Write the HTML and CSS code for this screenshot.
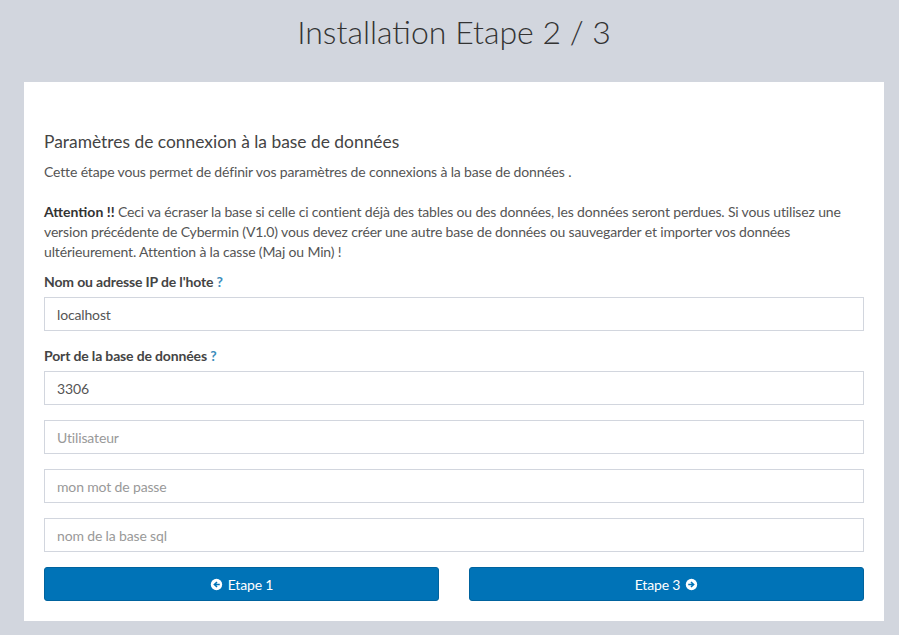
FILE: index.html
```html
<!DOCTYPE html>
<html lang="fr">
<head>
<meta charset="utf-8">
<title>Installation Etape 2 / 3</title>
<link rel="stylesheet" href="styles.css">
</head>
<body>
<div class="wrap">
  <h1 class="title">Installation Etape 2 / 3</h1>
  <div class="box">
    <h3 class="box-title">Paramètres de connexion à la base de données</h3>
    <p class="intro">Cette étape vous permet de définir vos paramètres de connexions à la base de données .</p>
    <p class="warn"><b>Attention !!</b> Ceci va écraser la base si celle ci contient déjà des tables ou des données, les données seront perdues. Si vous utilisez une version précédente de Cybermin (V1.0) vous devez créer une autre base de données ou sauvegarder et importer vos données ultérieurement. Attention à la casse (Maj ou Min) !</p>
    <div class="group">
      <label class="label">Nom ou adresse IP de l'hote <span class="q">?</span></label>
      <input class="field" type="text" value="localhost">
    </div>
    <div class="group">
      <label class="label">Port de la base de données <span class="q">?</span></label>
      <input class="field" type="text" value="3306">
    </div>
    <div class="group">
      <input class="field" type="text" placeholder="Utilisateur">
    </div>
    <div class="group">
      <input class="field" type="password" placeholder="mon mot de passe">
    </div>
    <div class="group">
      <input class="field" type="text" placeholder="nom de la base sql">
    </div>
    <div class="actions">
      <button class="btn"><svg class="ico" viewBox="0 0 16 16"><circle cx="8" cy="8" r="7" fill="#fff"/><path d="M4 8 L8 4.2 L9.3 5.5 L7.6 7.1 H12 V8.9 H7.6 L9.3 10.5 L8 11.8 Z" fill="#0073b7"/></svg>Etape 1</button>
      <button class="btn">Etape 3<svg class="ico ico-r" viewBox="0 0 16 16"><circle cx="8" cy="8" r="7" fill="#fff"/><path d="M12 8 L8 4.2 L6.7 5.5 L8.4 7.1 H4 V8.9 H8.4 L6.7 10.5 L8 11.8 Z" fill="#0073b7"/></svg></button>
    </div>
  </div>
</div>
</body>
</html>
```
FILE: styles.css
```css
html, body {
  margin: 0;
  padding: 0;
  background: #d2d6de;
}
body {
  font-family: Lato, "Open Sans", sans-serif;
  font-size: 14px;
  letter-spacing: -0.15px;
  color: #555;
}
.wrap {
  margin-left: 24px;
  width: 860px;
}
.title {
  margin: 0;
  padding-top: 12px;
  height: 82px;
  box-sizing: border-box;
  text-align: center;
  font-weight: 300;
  font-size: 32px;
  line-height: 40px;
  letter-spacing: 0;
  color: #333;
}
.box {
  background: #fff;
  padding: 50px 20px 20px;
}
.box-title {
  margin: 0;
  font-size: 17.4px;
  font-weight: 400;
  line-height: 20px;
  letter-spacing: 0;
  color: #444;
}
.intro {
  margin: 10px 0 20px;
  line-height: 20px;
}
.warn {
  margin: 0 0 10px;
  line-height: 20px;
}
.warn b { color: #333; letter-spacing: 0; }
.group {
  margin-bottom: 15px;
}
.label {
  display: block;
  font-weight: 700;
  color: #444;
  line-height: 20px;
  margin-bottom: 5px;
}
.q { color: #3c8dbc; }
.field {
  display: block;
  width: 100%;
  box-sizing: border-box;
  height: 34px;
  padding: 6px 12px;
  border: 1px solid #d2d6de;
  border-radius: 0;
  font-family: inherit;
  font-size: 14px;
  letter-spacing: -0.15px;
  color: #555;
  background: #fff;
  outline: none;
}
.field::placeholder { color: #999; }
.actions {
  display: grid;
  grid-template-columns: 1fr 1fr;
  gap: 30px;
}
.btn {
  height: 34px;
  border: 1px solid #00639e;
  border-radius: 3px;
  background: #0073b7;
  color: #fff;
  font-family: inherit;
  font-size: 14px;
  letter-spacing: -0.15px;
  display: flex;
  align-items: center;
  justify-content: center;
  gap: 5px;
  cursor: pointer;
}
.ico { width: 13px; height: 13px; }
```
